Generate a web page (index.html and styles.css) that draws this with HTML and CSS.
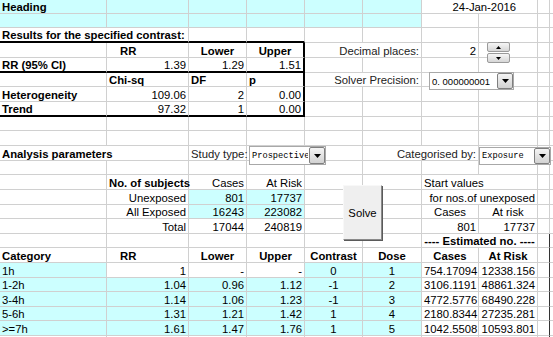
FILE: index.html
```html
<!DOCTYPE html>
<html lang="en">
<head>
    <meta charset="UTF-8">
    <title>Trend analysis</title>
    <link rel="stylesheet" href="styles.css">
</head>
<body>
<div class="sheet">
    <table class="grid">
        <colgroup>
            <col class="col-a"><col class="col-b"><col class="col-c"><col class="col-d"><col class="col-e">
            <col class="col-f"><col class="col-g"><col class="col-h"><col class="col-i"><col class="col-j">
        </colgroup>
        <!-- 1 -->
        <tr class="r14">
            <td class="fill b">Heading</td><td class="fill"></td><td class="fill"></td><td class="fill"></td><td class="fill"></td><td class="fill"></td>
            <td colspan="2" class="r date">24-Jan-2016</td><td></td><td></td>
        </tr>
        <!-- 2 -->
        <tr class="r14">
            <td class="fill"></td><td class="fill"></td><td class="fill"></td><td class="fill"></td><td class="fill"></td><td class="fill"></td>
            <td></td><td></td><td></td><td></td>
        </tr>
        <!-- 3 -->
        <tr class="r15">
            <td colspan="2" class="b tb">Results for the specified contrast:</td><td class="tb"></td><td class="tb"></td>
            <td></td><td></td><td></td><td></td><td></td><td></td>
        </tr>
        <!-- 4 -->
        <tr class="r15">
            <td></td><td class="b ind">RR</td><td class="b c">Lower</td><td class="b c tr">Upper</td>
            <td colspan="2" class="r label">Decimal places:</td><td class="r">2</td><td></td><td></td><td></td>
        </tr>
        <!-- 5 -->
        <tr class="r15">
            <td class="b tb">RR (95% CI)</td><td class="r tb">1.39</td><td class="r tb">1.29</td><td class="r tb tr">1.51</td>
            <td></td><td></td><td></td><td></td><td></td><td></td>
        </tr>
        <!-- 6 -->
        <tr class="r14">
            <td></td><td class="b">Chi-sq</td><td class="b">DF</td><td class="b tr">p</td>
            <td colspan="2" class="r label">Solver Precision:</td><td></td><td></td><td></td><td></td>
        </tr>
        <!-- 7 -->
        <tr class="r15">
            <td class="b">Heterogeneity</td><td class="r">109.06</td><td class="r">2</td><td class="r tr">0.00</td>
            <td></td><td></td><td></td><td></td><td></td><td></td>
        </tr>
        <!-- 8 -->
        <tr class="r15">
            <td class="b tb">Trend</td><td class="r tb">97.32</td><td class="r tb">1</td><td class="r tb tr">0.00</td>
            <td></td><td></td><td></td><td></td><td></td><td></td>
        </tr>
        <!-- 9 -->
        <tr class="r14"><td></td><td></td><td></td><td></td><td></td><td></td><td></td><td></td><td></td><td></td></tr>
        <!-- 10 -->
        <tr class="r15"><td></td><td></td><td></td><td></td><td></td><td></td><td></td><td></td><td></td><td></td></tr>
        <!-- 11 -->
        <tr class="r15">
            <td colspan="2" class="b">Analysis parameters</td><td class="r label">Study type:</td><td></td><td></td>
            <td colspan="2" class="r label">Categorised by:</td><td></td><td></td><td></td>
        </tr>
        <!-- 12 -->
        <tr class="r14"><td></td><td></td><td></td><td></td><td></td><td></td><td></td><td></td><td></td><td></td></tr>
        <!-- 13 -->
        <tr class="r15">
            <td></td><td class="b r">No. of subjects</td><td class="r">Cases</td><td class="r">At Risk</td><td></td><td></td>
            <td colspan="2">Start values</td><td></td><td></td>
        </tr>
        <!-- 14 -->
        <tr class="r15">
            <td></td><td class="r">Unexposed</td><td class="r fill">801</td><td class="r fill">17737</td><td></td><td></td>
            <td colspan="2" class="r">for nos.of unexposed</td><td></td><td></td>
        </tr>
        <!-- 15 -->
        <tr class="r14">
            <td></td><td class="r">All Exposed</td><td class="r fill">16243</td><td class="r fill">223082</td><td></td><td></td>
            <td class="c">Cases</td><td class="c">At risk</td><td></td><td></td>
        </tr>
        <!-- 16 -->
        <tr class="r15">
            <td></td><td class="r">Total</td><td class="r">17044</td><td class="r">240819</td><td></td><td></td>
            <td class="r">801</td><td class="r">17737</td><td></td><td></td>
        </tr>
        <!-- 17 -->
        <tr class="r14">
            <td></td><td></td><td></td><td></td><td></td><td></td>
            <td colspan="2" class="b c">---- Estimated no. ----</td><td class="edge"></td><td></td>
        </tr>
        <!-- 18 -->
        <tr class="r15">
            <td class="b">Category</td><td class="b ind">RR</td><td class="b c">Lower</td><td class="b c">Upper</td>
            <td class="b c">Contrast</td><td class="b c">Dose</td><td class="b c">Cases</td><td class="b c">At Risk</td><td class="edge"></td><td></td>
        </tr>
        <!-- 19 -->
        <tr class="r15">
            <td class="fill">1h</td><td class="r">1</td><td class="r">-</td><td class="r">-</td>
            <td class="c fill">0</td><td class="c fill">1</td><td class="r">754.17094</td><td class="r">12338.156</td><td class="edge"></td><td></td>
        </tr>
        <!-- 20 -->
        <tr class="r14">
            <td class="fill">1-2h</td><td class="r fill">1.04</td><td class="r fill">0.96</td><td class="r fill">1.12</td>
            <td class="c fill">-1</td><td class="c fill">2</td><td class="r">3106.1191</td><td class="r">48861.324</td><td class="edge"></td><td></td>
        </tr>
        <!-- 21 -->
        <tr class="r15">
            <td class="fill">3-4h</td><td class="r fill">1.14</td><td class="r fill">1.06</td><td class="r fill">1.23</td>
            <td class="c fill">-1</td><td class="c fill">3</td><td class="r">4772.5776</td><td class="r">68490.228</td><td class="edge"></td><td></td>
        </tr>
        <!-- 22 -->
        <tr class="r14">
            <td class="fill">5-6h</td><td class="r fill">1.31</td><td class="r fill">1.21</td><td class="r fill">1.42</td>
            <td class="c fill">1</td><td class="c fill">4</td><td class="r">2180.8344</td><td class="r">27235.281</td><td class="edge"></td><td></td>
        </tr>
        <!-- 23 -->
        <tr class="r15">
            <td class="fill">&gt;=7h</td><td class="r fill">1.61</td><td class="r fill">1.47</td><td class="r fill">1.76</td>
            <td class="c fill">1</td><td class="c fill">5</td><td class="r">1042.5508</td><td class="r">10593.801</td><td class="edge"></td><td></td>
        </tr>
        <!-- 24 -->
        <tr class="r14"><td></td><td></td><td></td><td></td><td></td><td></td><td></td><td></td><td class="edge"></td><td></td></tr>
    </table>

    <!-- form controls sitting on the sheet -->
    <div class="spin">
        <span class="spin-btn"><svg width="5" height="3" viewBox="0 0 5 3"><path d="M0 3h5L2.5 0z"/></svg></span>
        <span class="spin-btn"><svg width="5" height="3" viewBox="0 0 5 3"><path d="M0 0h5L2.5 3z"/></svg></span>
    </div>

    <div class="combo combo-solver">
        <span class="combo-text sans">0. 000000001</span>
        <span class="combo-btn"><svg width="7" height="4" viewBox="0 0 7 4"><path d="M0 0h7L3.5 4z"/></svg></span>
    </div>

    <div class="combo combo-study">
        <span class="combo-text">Prospective</span>
        <span class="combo-btn"><svg width="7" height="4" viewBox="0 0 7 4"><path d="M0 0h7L3.5 4z"/></svg></span>
    </div>

    <div class="combo combo-cat">
        <span class="combo-text">Exposure</span>
        <span class="combo-btn"><svg width="7" height="4" viewBox="0 0 7 4"><path d="M0 0h7L3.5 4z"/></svg></span>
    </div>

    <div class="solve">Solve</div>
</div>
</body>
</html>
```

FILE: styles.css
```css
*{
    margin: 0;
    padding: 0;
    box-sizing: border-box;
}
body{
    overflow: hidden;
    background: #fff;
    color: #000;
    font-family: "Liberation Sans", Arial, sans-serif;
    font-size: 11.3px;
}
.sheet{
    position: relative;
    width: 553px;
    height: 337px;
    overflow: hidden;
}

/* the grid */
.grid{
    border-collapse: separate;
    border-spacing: 0;
    table-layout: fixed;
    width: 563px;
}
.col-a{ width: 107px; }
.col-b{ width: 82px; }
.col-c{ width: 58px; }
.col-d{ width: 58px; }
.col-e{ width: 58px; }
.col-f{ width: 59px; }
.col-g{ width: 57px; }
.col-h{ width: 59px; }
.col-i{ width: 12px; }
.col-j{ width: 13px; }
.r14{ height: 14px; }
.r15{ height: 15px; }
.grid td{
    border-right: 1px solid #d0d0d0;
    border-bottom: 1px solid #d0d0d0;
    padding: 0 2px;
    line-height: 12px;
    vertical-align: bottom;
    white-space: nowrap;
    overflow: visible;
}
.b{ font-weight: bold; }
.r{ text-align: right; }
.c{ text-align: center; }
.ind{ padding-left: 13px !important; }
.fill{ background: #ccffff; }
.date{ padding-right: 21px !important; }
.label{ color: #222; }
.grid td.tb{ border-bottom: 2px solid #000; }
.grid td.tr{ border-right: 2px solid #000; }
.grid td.edge{ border-right: 1px solid #333; }

/* spinner */
.spin{
    position: absolute;
    left: 487px;
    top: 42px;
    width: 23px;
    display: flex;
    flex-direction: column;
    gap: 1px;
}
.spin-btn{
    height: 10px;
    display: flex;
    align-items: center;
    justify-content: center;
    border: 1px solid #9a9a9a;
    border-radius: 2px;
    background: linear-gradient(#f6f6f6, #d6d6d6);
}

/* drop-downs */
.combo{
    position: absolute;
    display: flex;
    align-items: stretch;
    background: #fff;
    border: 1px solid #a8a8a8;
}
.combo-solver{ left: 429px; top: 72px; width: 85px; height: 18px; }
.combo-study{ left: 249px; top: 146px; width: 77px; height: 19px; }
.combo-cat{ left: 479px; top: 147px; width: 72px; height: 18px; }
.combo-text{
    flex: 1;
    display: flex;
    align-items: center;
    padding-left: 2px;
    font-family: "Liberation Mono", monospace;
    font-size: 8.7px;
    overflow: hidden;
}
.combo-text.sans{
    font-family: "Liberation Sans", Arial, sans-serif;
    font-size: 9.5px;
}
.combo-btn{
    width: 16px;
    margin: 0 0 0 1px;
    display: flex;
    align-items: center;
    justify-content: center;
    border: 1px solid #7f7f7f;
    border-radius: 2px;
    background: linear-gradient(#f4f4f4, #d2d2d2);
}

/* button */
.solve{
    position: absolute;
    left: 343px;
    top: 185px;
    width: 39px;
    height: 55px;
    display: flex;
    align-items: center;
    justify-content: center;
    background: #efefef;
    border: 1px solid;
    border-color: #f8f8f8 #8a8a8a #8a8a8a #f8f8f8;
    box-shadow: 1px 1px 0 #5a5a5a;
}
```
